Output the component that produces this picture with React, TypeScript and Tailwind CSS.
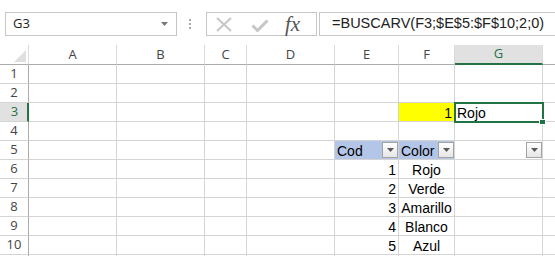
import React from "react";

const COLS = ["A", "B", "C", "D", "E", "F", "G", "H"];

type CellInfo = {
  text?: string;
  align?: "left" | "right" | "center";
  bg?: "yellow" | "blue";
  filter?: boolean;
  selected?: boolean;
};

const CELLS: Record<string, CellInfo> = {
  F3: { text: "1", align: "right", bg: "yellow" },
  G3: { text: "Rojo", align: "left", selected: true },
  E5: { text: "Cod", align: "left", bg: "blue", filter: true },
  F5: { text: "Color", align: "left", bg: "blue", filter: true },
  G5: { filter: true },
  E6: { text: "1", align: "right" },
  E7: { text: "2", align: "right" },
  E8: { text: "3", align: "right" },
  E9: { text: "4", align: "right" },
  E10: { text: "5", align: "right" },
  F6: { text: "Rojo", align: "center" },
  F7: { text: "Verde", align: "center" },
  F8: { text: "Amarillo", align: "center" },
  F9: { text: "Blanco", align: "center" },
  F10: { text: "Azul", align: "center" },
};

function FilterBtn() {
  return (
    <div className="ml-auto mb-[1px] flex h-[16px] w-[16px] shrink-0 items-center justify-center self-end border border-[#a3a3a3] bg-linear-to-b from-white to-[#e6e6e6]">
      <svg width="7" height="4" viewBox="0 0 7 4">
        <path d="M0 0h7L3.5 4z" fill="#5a5a5a" />
      </svg>
    </div>
  );
}

function Cell({ id }: { id: string }) {
  const c = CELLS[id];
  const bg =
    c?.bg === "yellow" ? "bg-[#ffff00]" : c?.bg === "blue" ? "bg-[#b4c6e7]" : "bg-white";
  const align =
    c?.align === "right" ? "justify-end pr-[2px]" : c?.align === "center" ? "justify-center" : "justify-start pl-[2px]";
  return (
    <div
      className={`relative flex items-end overflow-visible whitespace-nowrap border-r border-b border-[#d4d4d4] text-[14px] leading-[14px] text-black ${bg} ${align}`}
    >
      {c?.text && <span className="pb-[1px]">{c.text}</span>}
      {c?.filter && <FilterBtn />}
      {c?.selected && (
        <div className="pointer-events-none absolute left-[-1px] top-[-1px] z-10 h-[21px] w-[90px] border-2 border-[#217346]">
          <div className="absolute bottom-[-4px] right-[-4px] h-[6px] w-[7px] border border-white bg-[#217346]" />
        </div>
      )}
    </div>
  );
}

export default function App() {
  const rows = Array.from({ length: 11 }, (_, i) => i + 1);
  return (
    <div className="h-[256px] w-[555px] overflow-hidden bg-white font-['Liberation_Sans',Arial,sans-serif]">
      {/* Formula bar */}
      <div className="flex h-[45px] items-start pt-[12px]">
        <div className="ml-[5px] flex h-[24px] w-[172px] shrink-0 items-center border border-[#c6c6c6] pl-[7px] pr-[8px] font-['Open_Sans',sans-serif] text-[13px] text-[#222]">
          <span>G3</span>
          <svg className="ml-auto" width="7" height="4" viewBox="0 0 7 4">
            <path d="M0 0h7L3.5 4z" fill="#777" />
          </svg>
        </div>
        <div className="ml-[12px] flex h-[24px] w-[2px] shrink-0 flex-col items-center justify-center gap-[2px]">
          <div className="h-[2px] w-[2px] bg-[#a8a8a8]" />
          <div className="h-[2px] w-[2px] bg-[#a8a8a8]" />
          <div className="h-[2px] w-[2px] bg-[#a8a8a8]" />
        </div>
        <div className="ml-[15px] flex h-[24px] w-[111px] shrink-0 items-center border border-[#c6c6c6] pl-[9px]">
          <svg width="16" height="15" viewBox="0 0 16 15">
            <path d="M1 1L15 14M15 1L1 14" stroke="#c6c6c6" strokeWidth="2" fill="none" />
          </svg>
          <svg className="ml-[19px] mt-[3px]" width="18" height="13" viewBox="0 0 18 13">
            <path d="M1.5 6.5L6.5 11.5L16.5 1.5" stroke="#c6c6c6" strokeWidth="3" fill="none" />
          </svg>
          <span className="ml-[16px] font-['Liberation_Serif',serif] text-[21px] italic leading-none text-[#555]">
            fx
          </span>
        </div>
        <div className="ml-[2px] flex h-[24px] w-[260px] shrink-0 items-center border border-[#c6c6c6] pl-[12px] text-[14.5px] text-[#222]">
          =BUSCARV(F3;$E$5:$F$10;2;0)
        </div>
      </div>

      {/* Grid */}
      <div className="grid grid-cols-[29px_88px_88px_42px_88px_64px_56px_88px_88px] grid-rows-[20px_repeat(11,19px)]">
        {/* corner */}
        <div className="flex items-end justify-end border-r border-b border-r-[#dadada] border-b-[#ababab] pb-[2px] pr-[2px]">
          <svg width="12" height="12" viewBox="0 0 12 12">
            <path d="M12 0V12H0Z" fill="#dfdfdf" />
          </svg>
        </div>
        {COLS.map((c) =>
          c === "G" ? (
            <div
              key={c}
              className="flex items-center justify-center border-r border-b-2 border-r-[#dadada] border-b-[#217346] bg-[#e1e1e1] font-['Open_Sans',sans-serif] text-[13px] text-[#217346]"
            >
              {c}
            </div>
          ) : (
            <div
              key={c}
              className="flex items-center justify-center border-r border-b border-r-[#dadada] border-b-[#ababab] bg-white font-['Open_Sans',sans-serif] text-[13px] text-[#444]"
            >
              {c === "H" ? "" : c}
            </div>
          )
        )}
        {rows.map((r) => (
          <React.Fragment key={r}>
            {r === 3 ? (
              <div className="flex items-center justify-center border-r-2 border-b border-r-[#217346] border-b-[#d4d4d4] bg-[#e1e1e1] pl-[2px] font-['Open_Sans',sans-serif] text-[13px] text-[#217346]">
                {r}
              </div>
            ) : (
              <div className="flex items-center justify-center border-r border-b border-r-[#ababab] border-b-[#d4d4d4] bg-white font-['Open_Sans',sans-serif] text-[13px] text-[#444]">
                {r === 11 ? "" : r}
              </div>
            )}
            {COLS.map((c) => (
              <Cell key={c + r} id={c + r} />
            ))}
          </React.Fragment>
        ))}
      </div>
    </div>
  );
}
